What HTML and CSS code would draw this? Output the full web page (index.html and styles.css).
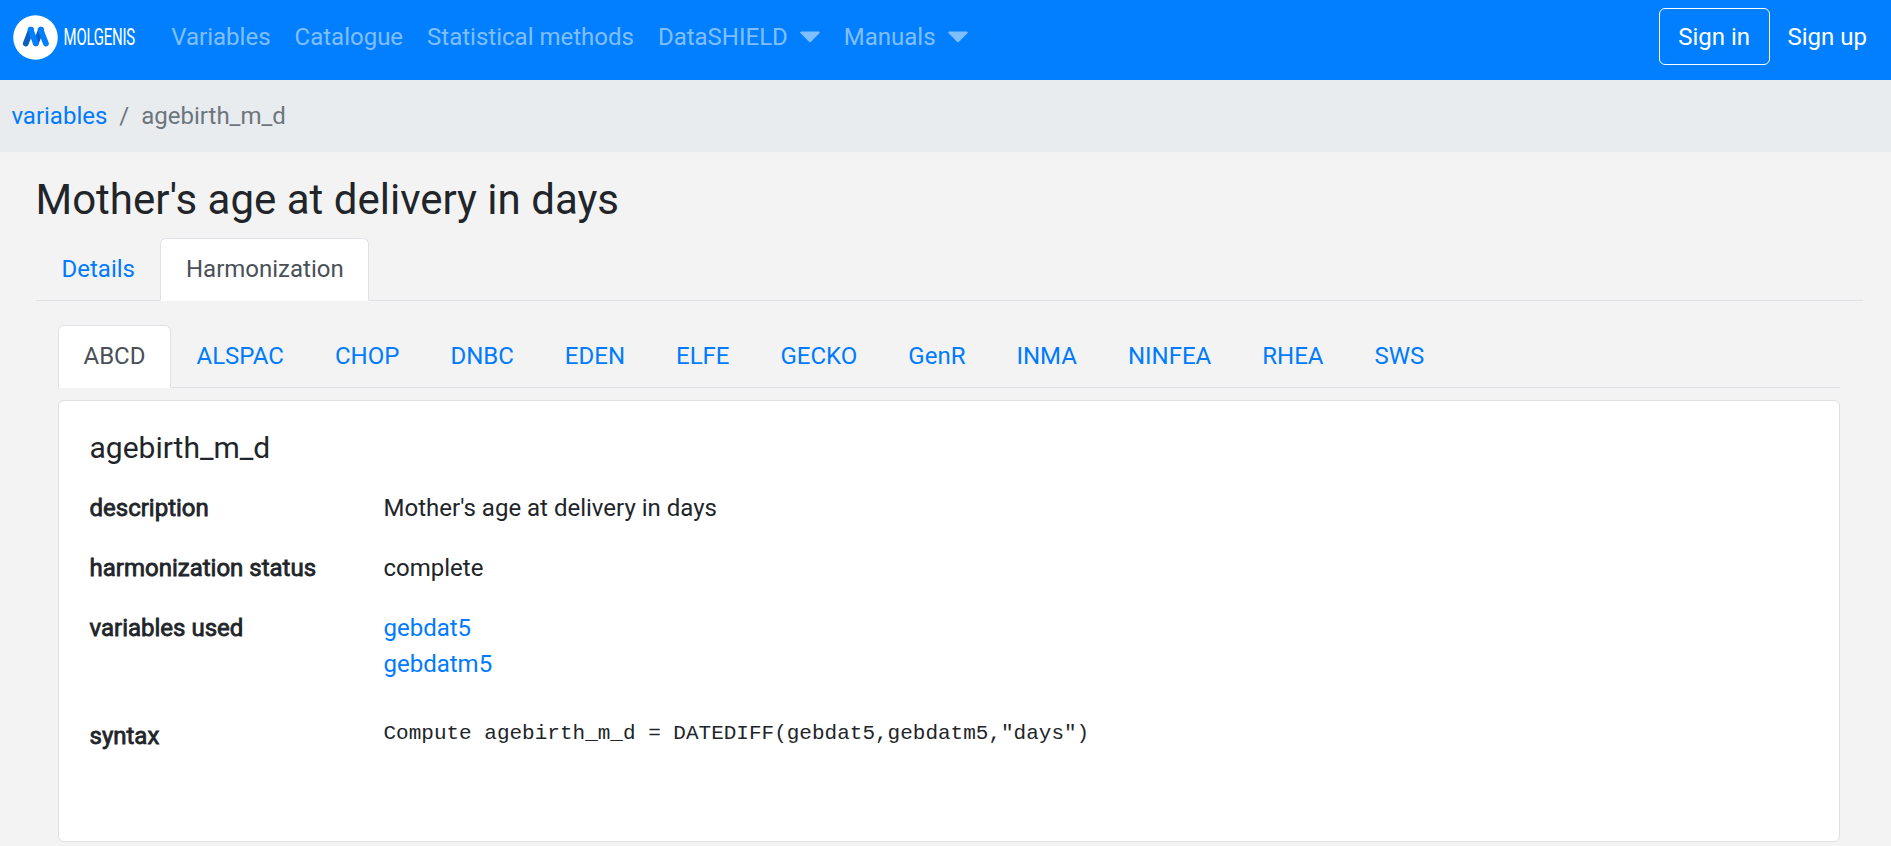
FILE: index.html
```html
<!DOCTYPE html>
<html lang="en">
<head>
<meta charset="utf-8">
<title>Mother's age at delivery in days</title>
<link rel="stylesheet" href="styles.css">
</head>
<body>
<nav class="navbar">
  <a class="brand" href="#">
    <svg width="126" height="46" viewBox="0 0 126 46">
      <circle cx="22.5" cy="22.5" r="22.3" fill="#fff"/>
      <g fill="none" stroke-linecap="round" stroke-width="5.8">
        <path d="M12.8 28.5L18 14.8M22.8 28.3L28 14.8" stroke="#0a5fc0"/>
        <path d="M17.6 14.8L22.8 28.3M27.6 14.8L32.9 28.5" stroke="#017fff"/>
      </g>
      <text class="brand-text" transform="translate(50.6 30) scale(.65 1)" textLength="110" lengthAdjust="spacing">MOLGENIS</text>
    </svg>
  </a>
  <ul class="menu">
    <li><a href="#">Variables</a></li>
    <li><a href="#">Catalogue</a></li>
    <li><a href="#">Statistical methods</a></li>
    <li><a href="#">DataSHIELD<svg class="caret" width="20" height="12" viewBox="0 0 20 12"><path d="M1 .5h18q1.3 .6.4 1.8L11 10.8q-1 .8-2 0L.6 2.3Q-.3 1.1 1 .5z"/></svg></a></li>
    <li><a href="#">Manuals<svg class="caret" width="20" height="12" viewBox="0 0 20 12"><path d="M1 .5h18q1.3 .6.4 1.8L11 10.8q-1 .8-2 0L.6 2.3Q-.3 1.1 1 .5z"/></svg></a></li>
  </ul>
  <div class="account">
    <a class="sign-in" href="#">Sign in</a>
    <a class="sign-up" href="#">Sign up</a>
  </div>
</nav>
<ol class="breadcrumb">
  <li><a href="#">variables</a></li>
  <li class="current">agebirth_m_d</li>
</ol>
<main class="page">
  <h1>Mother's age at delivery in days</h1>
  <ul class="tabs">
    <li><a href="#">Details</a></li>
    <li><a class="active" href="#">Harmonization</a></li>
  </ul>
  <section class="harmonization">
    <ul class="tabs">
      <li><a class="active" href="#">ABCD</a></li>
      <li><a href="#">ALSPAC</a></li>
      <li><a href="#">CHOP</a></li>
      <li><a href="#">DNBC</a></li>
      <li><a href="#">EDEN</a></li>
      <li><a href="#">ELFE</a></li>
      <li><a href="#">GECKO</a></li>
      <li><a href="#">GenR</a></li>
      <li><a href="#">INMA</a></li>
      <li><a href="#">NINFEA</a></li>
      <li><a href="#">RHEA</a></li>
      <li><a href="#">SWS</a></li>
    </ul>
    <article class="card">
      <h2>agebirth_m_d</h2>
      <dl>
        <dt>description</dt>
        <dd>Mother's age at delivery in days</dd>
        <dt>harmonization status</dt>
        <dd>complete</dd>
        <dt>variables used</dt>
        <dd class="links"><a href="#">gebdat5</a><a href="#">gebdatm5</a></dd>
        <dt>syntax</dt>
        <dd><pre>Compute agebirth_m_d = DATEDIFF(gebdat5,gebdatm5,"days")</pre></dd>
      </dl>
    </article>
  </section>
</main>
</body>
</html>
```
FILE: styles.css
```css
* { box-sizing: border-box; }
html { overflow: hidden; }
body {
  margin: 0;
  background: #f3f3f3;
  color: #212529;
  font: 24px/36px Roboto, "Liberation Sans", sans-serif;
}
a { color: #007bff; text-decoration: none; }
ul, ol { list-style: none; margin: 0; padding: 0; }

.navbar {
  display: flex;
  align-items: flex-start;
  height: 80px;
  padding: 8px 12px 0 13px;
  background: #017fff;
}
.brand { display: flex; margin-top: 7px; width: 146.3px; }
.brand-text { font-size: 23px; fill: #fff; }
.menu { display: flex; padding-top: 11px; }
.menu a { display: flex; align-items: center; padding: 0 12px; color: rgba(255, 255, 255, .5); }
.caret { margin-left: 12px; fill: currentColor; }
.account { display: flex; margin-left: auto; }
.account a { color: #fff; }
.sign-in {
  height: 57px;
  padding: 10px 18.5px;
  border: 1px solid #fff;
  border-radius: 6px;
}
.sign-up { padding: 11px 12px 0 18px; }

.breadcrumb { display: flex; height: 72px; padding: 18px 11.4px; background: #e9ecef; }
.breadcrumb .current { color: #6c757d; }
.breadcrumb .current::before { content: "/"; padding: 0 12px; }

.page { padding: 23px 28px 0 36px; }
h1, h2 { margin: 0; font-weight: 400; }
h1 { margin: 0 0 13px -.5px; font-size: 42px; line-height: 50.4px; }

.tabs { display: flex; border-bottom: 1px solid #dee2e6; }
.tabs li { margin-bottom: -1px; }
.tabs a {
  display: block;
  padding: 12px 24.5px 13px;
  border: 1px solid transparent;
  border-radius: 6px 6px 0 0;
}
.tabs .active {
  color: #495057;
  background: #fff;
  border-color: #dee2e6 #dee2e6 #fff;
}

.harmonization { padding: 24px 23px 0 22px; }
.card {
  height: 441.5px;
  margin-top: 12px;
  padding: 28.5px 30.5px;
  background: #fff;
  border: 1px solid #dfdfdf;
  border-radius: 6px;
}
h2 { margin-bottom: 24.5px; font-size: 30px; line-height: 36px; }
dl { display: grid; grid-template-columns: 294px 1fr; row-gap: 24px; margin: 0; }
dt { -webkit-text-stroke: .8px currentColor; }
dd { margin: 0; }
.links { display: flex; flex-direction: column; align-items: flex-start; padding-bottom: 12px; }
pre { margin: 0; font: 21px/31px "Liberation Mono", monospace; }
```
